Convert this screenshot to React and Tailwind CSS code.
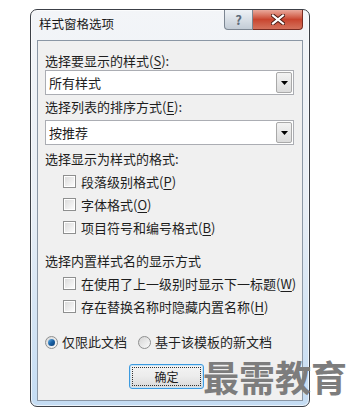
import React from "react";

const font = { fontFamily: '"Noto Sans CJK SC", "Microsoft YaHei", sans-serif' };

function Select({ value }) {
  return (
    <div className="flex h-[25px] w-[249px] border border-[#abadb3] bg-white">
      <div className="flex flex-1 items-center pl-[3px] text-[13px] leading-[16px] text-[#1e1e1e]">{value}</div>
      <div className="m-px flex w-[16px] items-center justify-center rounded-[2px] border border-[#a9a9a9] bg-gradient-to-b from-[#f3f3f3] to-[#dcdcdc]">
        <svg width="7" height="4" viewBox="0 0 7 4"><path d="M0 0H7L3.5 4Z" fill="#000" /></svg>
      </div>
    </div>
  );
}

function Check({ children }) {
  return (
    <div className="flex h-[23px] items-center pl-[18px]">
      <div className="h-[13px] w-[13px] border border-[#8e8f8f] bg-white p-px">
        <div className="h-full w-full bg-gradient-to-br from-[#dcdcdc] to-[#fbfbfb]" />
      </div>
      <span className="ml-[5px] text-[13px] leading-[16px] text-[#1e1e1e]">{children}</span>
    </div>
  );
}

function U({ c }) {
  return <span className="underline underline-offset-2">{c}</span>;
}

export default function App() {
  return (
    <div className="relative h-[417px] w-[353px] overflow-hidden bg-white" style={font}>
      <div className="ml-[30px] mt-[9px] flex h-[398px] w-[280px] flex-col rounded-[7px] border border-[#3c4047] bg-gradient-to-b from-[#f3f5f8] via-[#e8eef5] to-[#c4dcf3] shadow-[inset_0_0_0_1px_#ffffffaa]">
        <div className="flex h-[30px] items-start">
          <div className="pl-[8px] pt-[6px] text-[12.5px] leading-[16px] text-[#1a1a1a]">样式窗格选项</div>
          <div className="ml-auto mr-[6px] flex">
            <div className="flex h-[20px] w-[29px] items-center justify-center rounded-bl-[4px] border border-t-0 border-[#7c8692] bg-gradient-to-b from-[#eef2f6] to-[#c3ccd6] text-[13px] font-bold leading-none text-[#5d6b7a]">?</div>
            <div className="flex h-[20px] w-[50px] items-center justify-center rounded-br-[4px] border border-l-0 border-t-0 border-[#7a2c22] bg-gradient-to-b from-[#e9a99c] via-[#c9452f] to-[#d4715c]">
              <svg width="14" height="11" viewBox="0 0 14 11">
                <path d="M2 1.5L12 9.5M12 1.5L2 9.5" stroke="#4a1a12" strokeWidth="4" strokeLinecap="square" />
                <path d="M2 1.5L12 9.5M12 1.5L2 9.5" stroke="#fff" strokeWidth="2.2" strokeLinecap="square" />
              </svg>
            </div>
          </div>
        </div>
        <div className="mx-[6px] mb-[5px] flex flex-1 flex-col border border-[#8b97a5] bg-[#f0f0f0] pl-[7px] text-[#1e1e1e]">
          <div className="mt-[12px] text-[13px] leading-[16px]">选择要显示的样式(<U c="S" />):</div>
          <div className="mt-[1px]"><Select value="所有样式" /></div>
          <div className="mt-[4px] text-[13px] leading-[16px]">选择列表的排序方式(<U c="E" />):</div>
          <div className="mt-[5px]"><Select value="按推荐" /></div>
          <div className="mt-[6px] text-[13px] leading-[16px]">选择显示为样式的格式:</div>
          <div className="mt-[3px]">
            <Check>段落级别格式(<U c="P" />)</Check>
            <Check>字体格式(<U c="O" />)</Check>
            <Check>项目符号和编号格式(<U c="B" />)</Check>
          </div>
          <div className="mt-[14px] text-[13px] leading-[16px]">选择内置样式名的显示方式</div>
          <div className="mt-[3px]">
            <Check>在使用了上一级别时显示下一标题(<U c="W" />)</Check>
            <Check>存在替换名称时隐藏内置名称(<U c="H" />)</Check>
          </div>
          <div className="mt-[14px] flex h-[20px] items-center">
            <div className="flex h-[13px] w-[13px] items-center justify-center rounded-full border border-[#8e8f8f] bg-gradient-to-br from-[#d8d8d8] to-[#fafafa]">
              <div className="h-[7px] w-[7px] rounded-full bg-gradient-to-br from-[#6fb8e8] via-[#1a62a6] to-[#0c3d73]" />
            </div>
            <span className="ml-[4px] text-[13px] leading-[16px]">仅限此文档</span>
            <div className="ml-[11px] h-[13px] w-[13px] rounded-full border border-[#8e8f8f] bg-gradient-to-br from-[#d4d4d4] to-[#fbfbfb]" />
            <span className="ml-[4px] text-[13px] leading-[16px]">基于该模板的新文档</span>
          </div>
          <div className="ml-[84px] mt-[12px] flex h-[25px] w-[75px] items-center justify-center rounded-[3px] border border-[#3c9be0] bg-gradient-to-b from-[#f4f4f4] via-[#ececec] to-[#d8d8d8] p-[2px] shadow-[inset_0_0_0_1px_#c5e3f7]">
            <div className="flex h-full w-full items-center justify-center border border-dotted border-[#333] text-[12px] leading-none">确定</div>
          </div>
        </div>
      </div>
      <div className="absolute left-[203px] top-[358px] text-[36px] font-bold leading-[36px] text-[#7d7d7d]">最需教育</div>
    </div>
  );
}
